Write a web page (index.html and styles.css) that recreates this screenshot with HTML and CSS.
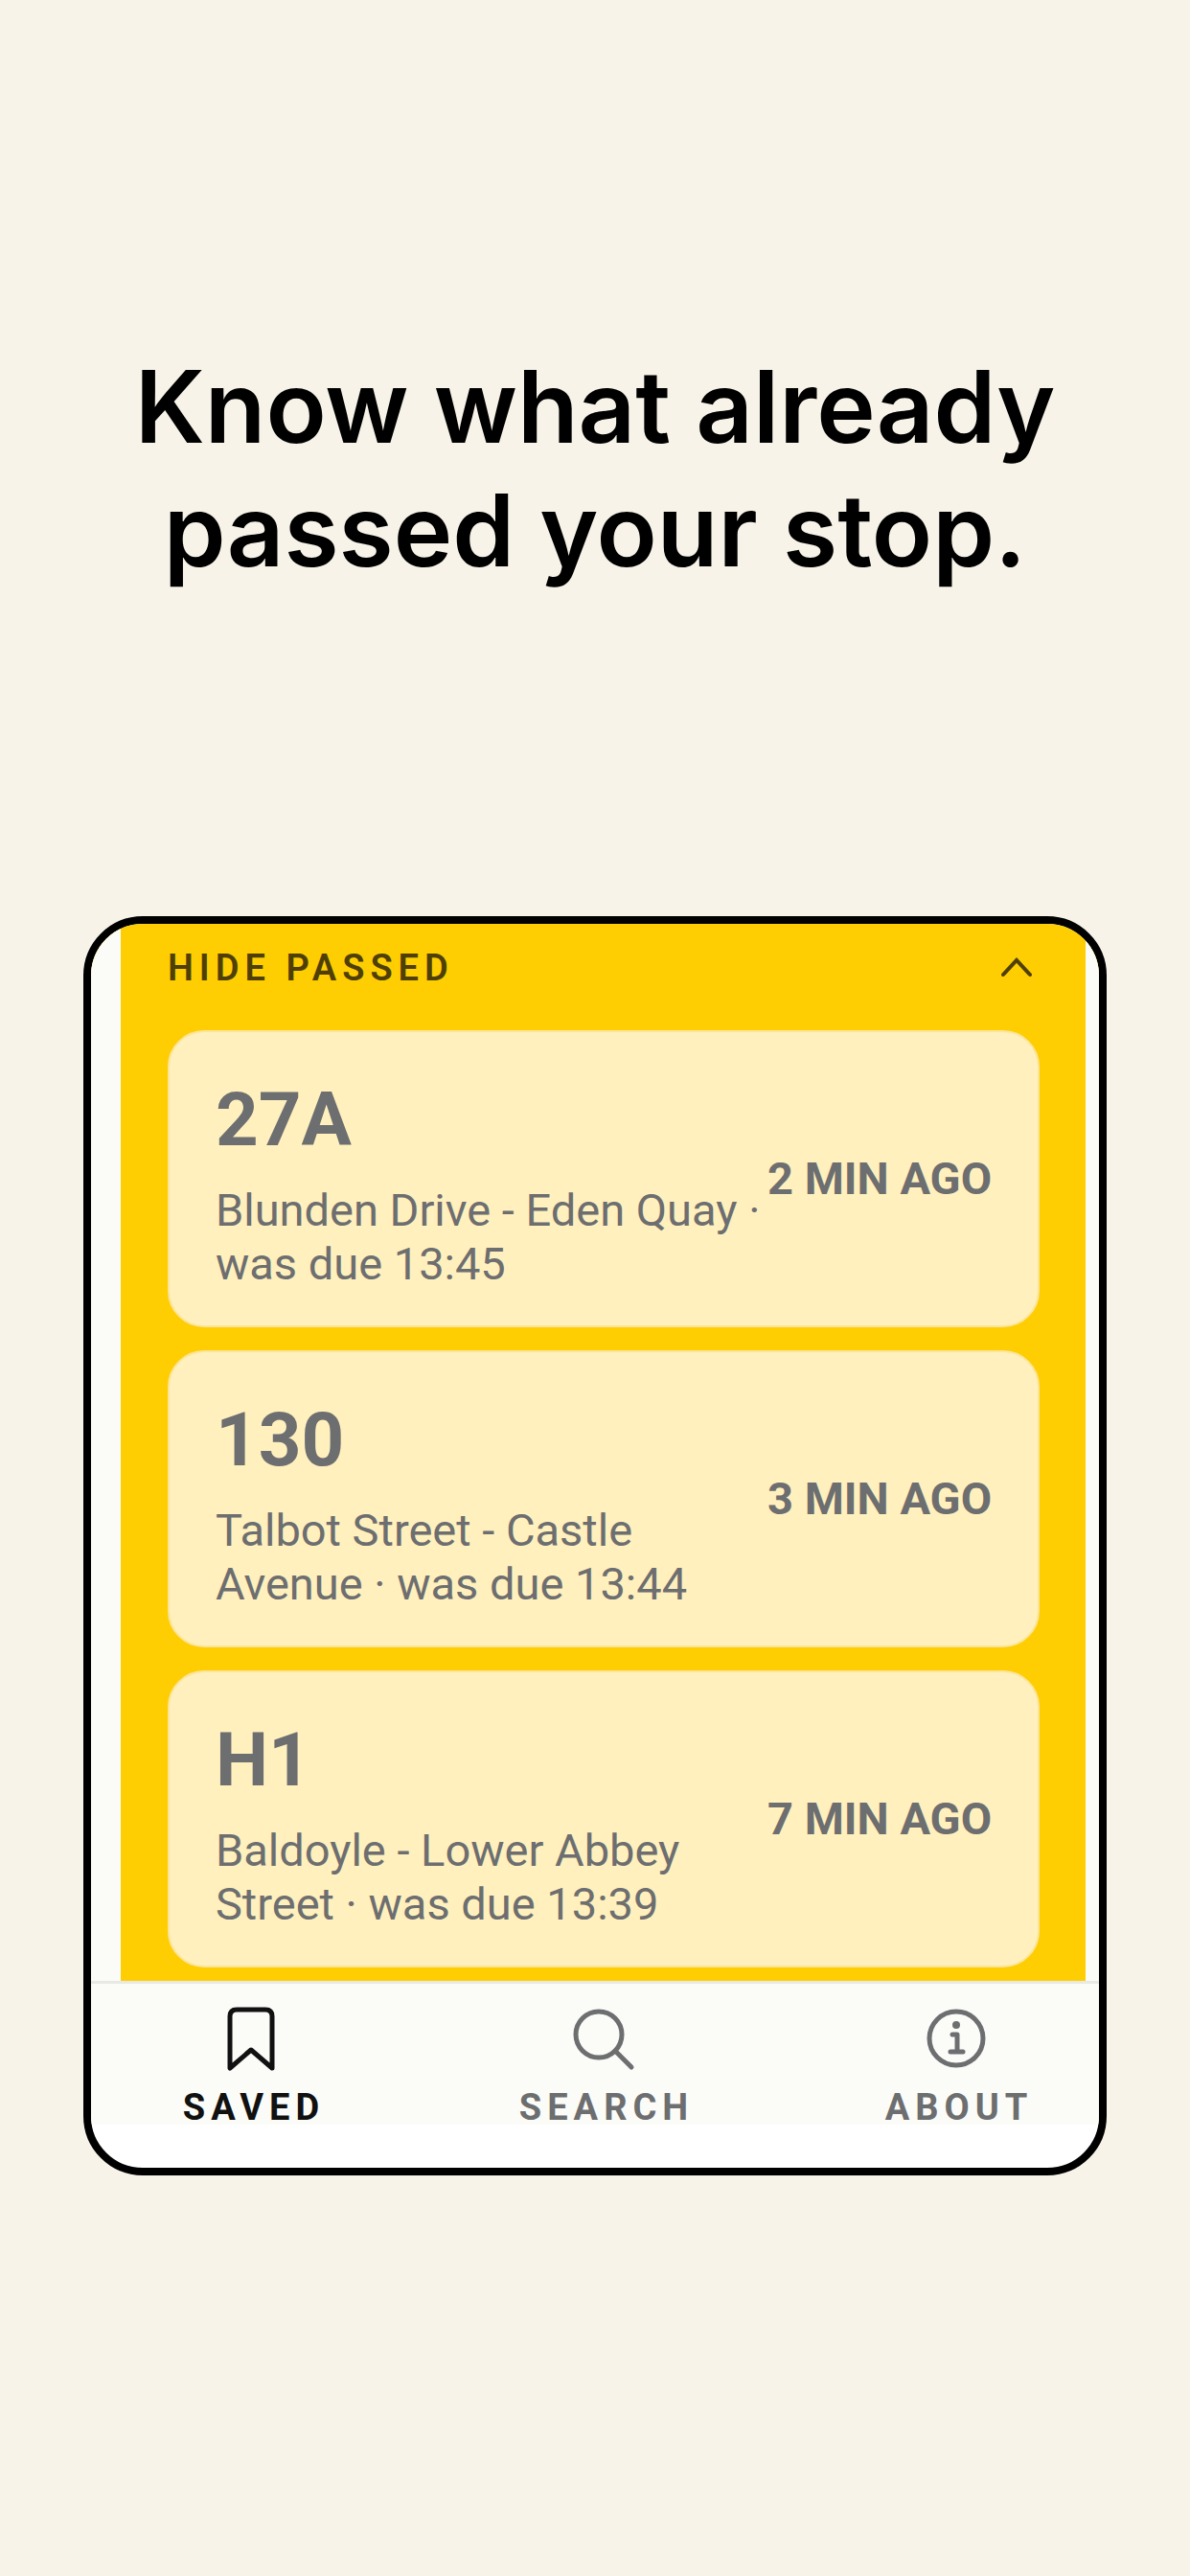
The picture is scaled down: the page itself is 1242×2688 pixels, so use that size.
FILE: index.html
```html
<!DOCTYPE html>
<html lang="en">
<head>
    <meta charset="UTF-8">
    <meta name="viewport" content="width=device-width, initial-scale=1.0">
    <title>Passed departures</title>
    <link rel="stylesheet" href="styles.css">
</head>
<body>
    <h1 class="headline">Know what already<br>passed your stop.</h1>
    <main class="phone">
        <section class="departures">
            <button class="toggle" type="button" aria-expanded="true">
                <span>HIDE PASSED</span>
                <svg class="chevron" viewBox="0 0 48 48" aria-hidden="true">
                    <path d="M10 31 L24 16 L38 31"/>
                </svg>
            </button>
            <ul class="cards">
                <li class="card">
                    <div class="info">
                        <h2 class="route">27A</h2>
                        <p class="details">Blunden Drive - Eden Quay · was due 13:45</p>
                    </div>
                    <span class="ago">2 MIN AGO</span>
                </li>
                <li class="card">
                    <div class="info">
                        <h2 class="route">130</h2>
                        <p class="details">Talbot Street - Castle Avenue · was due 13:44</p>
                    </div>
                    <span class="ago">3 MIN AGO</span>
                </li>
                <li class="card">
                    <div class="info">
                        <h2 class="route">H1</h2>
                        <p class="details">Baldoyle - Lower Abbey Street · was due 13:39</p>
                    </div>
                    <span class="ago">7 MIN AGO</span>
                </li>
            </ul>
        </section>
        <nav class="tabs">
            <a class="tab active" href="#saved">
                <svg class="icon" viewBox="0 0 72 72" aria-hidden="true">
                    <path d="M14 67 V13 Q14 6 21 6 H51 Q58 6 58 13 V67 L36 48 Z"/>
                </svg>
                <span>SAVED</span>
            </a>
            <a class="tab" href="#search">
                <svg class="icon" viewBox="0 0 72 72" aria-hidden="true">
                    <circle cx="31" cy="32" r="24"/>
                    <path d="M48 49 L65 66"/>
                </svg>
                <span>SEARCH</span>
            </a>
            <a class="tab" href="#about">
                <svg class="icon" viewBox="0 0 72 72" aria-hidden="true">
                    <circle cx="36" cy="36" r="28"/>
                    <circle class="dot" cx="36" cy="22" r="4"/>
                    <path d="M32 32 H37 V50 M30 50 H43"/>
                </svg>
                <span>ABOUT</span>
            </a>
        </nav>
    </main>
</body>
</html>
```
FILE: styles.css
```css
* {
    box-sizing: border-box;
}
body {
    margin: 0;
    padding: 360px 7% 0;
    background-color: #f7f3e8;
    font-family: Roboto, sans-serif;
    color: #6d6e70;
}
.headline {
    margin: 0 0 338px;
    font-family: Inter, sans-serif;
    font-size: 104px;
    line-height: 129px;
    font-weight: 600;
    color: #000;
    text-align: center;
}
.phone {
    padding-bottom: 45px;
    background-color: #fff;
    border: 8px solid #000;
    border-radius: 62px;
    overflow: hidden;
}
.departures {
    padding: 0 48px 14px 49px;
    background-color: #fecd02;
    border-left: 31px solid #fbfcf8;
    border-right: 14px solid #fbfcf8;
}
.toggle {
    display: flex;
    justify-content: space-between;
    align-items: center;
    width: 100%;
    height: 111px;
    padding: 0 0 20px;
    border: none;
    background: none;
    font-family: inherit;
    font-size: 38px;
    font-weight: 600;
    letter-spacing: 6px;
    color: #4f3f02;
    cursor: pointer;
}
.chevron {
    width: 48px;
    height: 48px;
    fill: none;
    stroke: #4f3f02;
    stroke-width: 4;
    stroke-linecap: round;
}
.cards {
    display: flex;
    flex-direction: column;
    gap: 24px;
    margin: 0;
    padding: 0;
    list-style: none;
}
.card {
    display: flex;
    justify-content: space-between;
    align-items: center;
    gap: 4px;
    padding: 36px 48px;
    background-color: #fff0bd;
    border: 2px solid #fbe59a;
    border-radius: 38px;
}
.route {
    margin: 0 0 10px;
    font-size: 78px;
    line-height: 112px;
    font-weight: 700;
}
.details {
    margin: 0;
    font-size: 47px;
    line-height: 56px;
}
.ago {
    flex-shrink: 0;
    font-size: 47px;
    line-height: 56px;
    font-weight: 700;
}
.tabs {
    display: flex;
    margin: 0 -35px 0 -17px;
    background-color: #fbfcf8;
    border-top: 3px solid #e8e8e5;
}
.tab {
    flex: 1;
    display: flex;
    flex-direction: column;
    align-items: center;
    gap: 18px;
    padding-top: 21px;
    font-size: 38px;
    line-height: 36px;
    font-weight: 700;
    letter-spacing: 6px;
    text-decoration: none;
    color: #6d6e70;
}
.tab span {
    padding-left: 6px;
}
.tab.active {
    color: #111;
}
.icon {
    width: 72px;
    height: 72px;
    fill: none;
    stroke: currentColor;
    stroke-width: 5;
    stroke-linecap: round;
    stroke-linejoin: round;
}
.dot {
    fill: currentColor;
    stroke: none;
}
```
